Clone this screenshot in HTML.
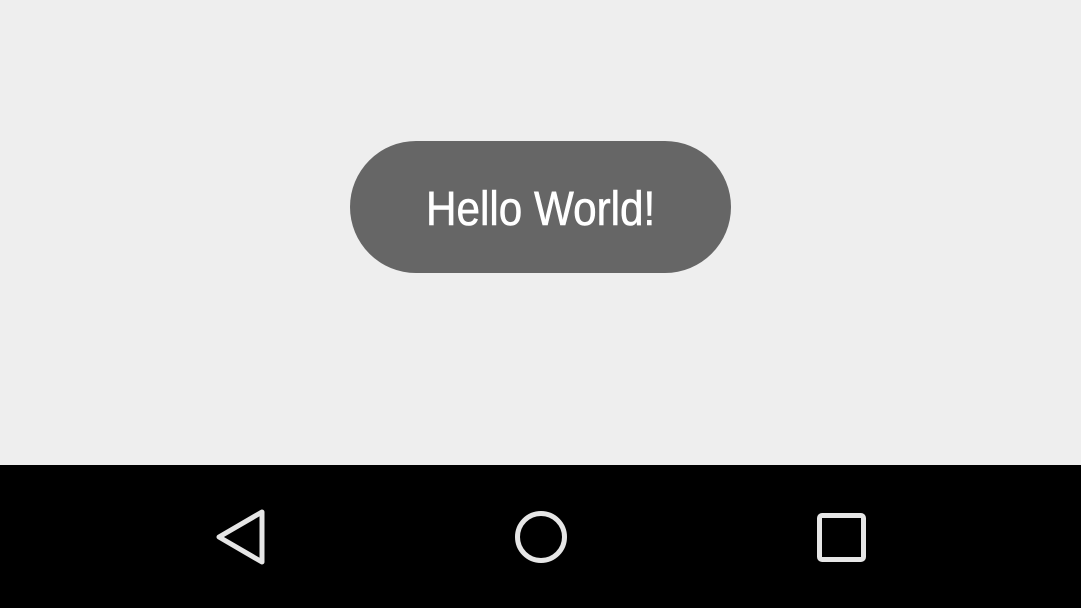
<!DOCTYPE html>
<html><head><style>
html,body{margin:0;padding:0;width:1081px;height:608px;overflow:hidden;background:#eeeeee;}
.btn{position:absolute;left:350px;top:141px;width:381px;height:132px;border-radius:66px;background:#666666;}
.txt{position:absolute;left:426px;top:180px;font-family:"Liberation Sans",sans-serif;font-size:48px;color:#fff;white-space:nowrap;transform:scaleX(0.88);transform-origin:0 0;line-height:60px;-webkit-text-stroke:0.6px #fff;}
.bar{position:absolute;left:0;top:465px;width:1081px;height:143px;background:#000;}
</style></head><body>
<div class="btn"></div>
<div class="txt">Hello World!</div>
<div class="bar"></div>
<svg style="position:absolute;left:0;top:0" width="1081" height="608">
<path d="M262 512 L262 562 L219 537 Z" fill="none" stroke="#e6e6e6" stroke-width="5" stroke-linejoin="round"/>
<circle cx="541" cy="537" r="23.5" fill="none" stroke="#e6e6e6" stroke-width="5"/>
<rect x="819.5" y="515.5" width="44" height="44" rx="2.5" fill="none" stroke="#e6e6e6" stroke-width="5"/>
</svg>
</body></html>
